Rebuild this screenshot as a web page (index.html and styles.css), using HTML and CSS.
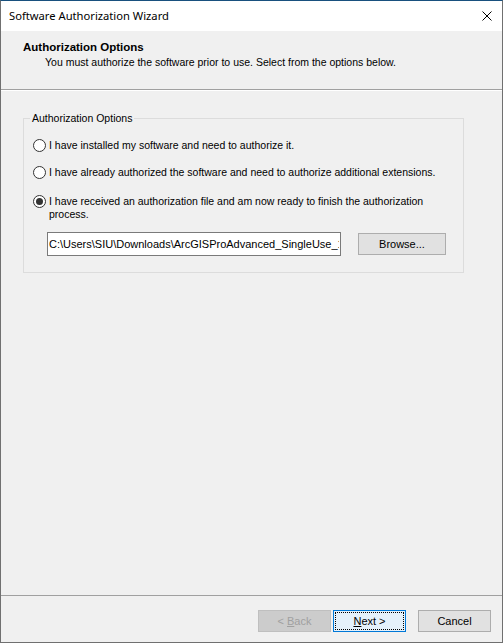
FILE: index.html
```html
<!DOCTYPE html>
<html lang="en">
<head>
    <meta charset="UTF-8">
    <meta name="viewport" content="width=device-width, initial-scale=1.0">
    <title>Software Authorization Wizard</title>
    <link rel="stylesheet" href="styles.css">
</head>
<body>
    <div class="window">
        <div class="titlebar">
            <span class="title">Software Authorization Wizard</span>
            <svg class="close" width="10" height="10" viewBox="0 0 10 10">
                <path d="M0.5 0.5 L9.5 9.5 M9.5 0.5 L0.5 9.5" stroke="#000" stroke-width="1" fill="none"/>
            </svg>
        </div>

        <div class="header">
            <div class="header-title">Authorization Options</div>
            <div class="header-sub">You must authorize the software prior to use. Select from the options below.</div>
        </div>

        <div class="content">
            <fieldset class="group">
                <legend>Authorization Options</legend>

                <label class="option">
                    <span class="radio"></span>
                    <span>I have installed my software and need to authorize it.</span>
                </label>
                <label class="option">
                    <span class="radio"></span>
                    <span>I have already authorized the software and need to authorize additional extensions.</span>
                </label>
                <label class="option option-last">
                    <span class="radio checked"></span>
                    <span>I have received an authorization file and am now ready to finish the authorization<br>process.</span>
                </label>

                <div class="file-row">
                    <input class="file-path" type="text" value="C:\Users\SIU\Downloads\ArcGISProAdvanced_SingleUse_1.prvc" readonly>
                    <button class="btn">Browse...</button>
                </div>
            </fieldset>
        </div>

        <div class="footer">
            <button class="btn btn-disabled">&lt; <u>B</u>ack</button>
            <button class="btn btn-default"><u>N</u>ext &gt;</button>
            <button class="btn btn-cancel">Cancel</button>
        </div>
    </div>
</body>
</html>
```

FILE: styles.css
```css
* {
    margin: 0;
    padding: 0;
    box-sizing: border-box;
}

body {
    font-family: "Liberation Sans", Arial, sans-serif;
    font-size: 10.5px;
    color: #000;
    background-color: #f0f0f0;
}

.window {
    width: 503px;
    height: 643px;
    display: flex;
    flex-direction: column;
    background-color: #f0f0f0;
    border: 1px solid #707070;
    border-top-color: #18507e;
}

/* barra de titulo */
.titlebar {
    height: 30px;
    flex-shrink: 0;
    display: flex;
    align-items: center;
    justify-content: space-between;
    padding: 0 10px 0 8px;
    background-color: #fff;
}

.title {
    font-family: "Noto Sans", "Open Sans", sans-serif;
    font-size: 11.2px;
    line-height: 16px;
}

.close {
    display: block;
}

/* cabecalho do assistente */
.header {
    height: 59px;
    flex-shrink: 0;
    padding: 10px 0 0 22px;
    border-bottom: 1px solid #a0a0a0;
    box-shadow: 0 1px 0 #fff;
}

.header-title {
    font-weight: bold;
    font-size: 11.5px;
    line-height: 13px;
}

.header-sub {
    margin: 2px 0 0 22px;
    line-height: 13px;
}

.content {
    flex: 1;
    padding: 21px 0 0 22px;
}

.group {
    width: 441px;
    border: 1px solid #dcdcdc;
    padding: 0 0 16px 9px;
}

.group legend {
    font-size: 10.5px;
    line-height: 14px;
    margin-left: -3px;
    padding: 0 2px;
}

.option {
    display: flex;
    align-items: flex-start;
    gap: 3px;
    margin-top: 14px;
    line-height: 13px;
}

.option-last {
    margin-top: 16px;
}

.radio {
    width: 13px;
    height: 13px;
    flex-shrink: 0;
    border: 1px solid #333;
    border-radius: 50%;
    background-color: #fff;
    display: flex;
    align-items: center;
    justify-content: center;
}

.radio.checked::after {
    content: "";
    width: 7px;
    height: 7px;
    border-radius: 50%;
    background-color: #333;
}

.file-row {
    display: flex;
    align-items: center;
    margin-top: 11px;
    padding-left: 14px;
}

.file-path {
    width: 294px;
    height: 24px;
    border: 1px solid #7a7a7a;
    background-color: #fff;
    padding: 0 1px;
    font-family: "Liberation Sans", Arial, sans-serif;
    font-size: 11px;
    color: #000;
    outline: none;
}

.btn {
    height: 22px;
    font-family: "Liberation Sans", Arial, sans-serif;
    font-size: 11px;
    color: #000;
    background-color: #e1e1e1;
    border: 1px solid #adadad;
}

.file-row .btn {
    width: 88px;
    margin-left: 17px;
}

/* botoes de baixo */
.footer {
    height: 47px;
    flex-shrink: 0;
    display: flex;
    justify-content: flex-end;
    align-items: flex-start;
    padding: 14px 11px 0 0;
    border-top: 1px solid #a0a0a0;
}

.footer .btn {
    width: 73px;
}

.btn-disabled {
    background-color: #cccccc;
    border-color: #bfbfbf;
    color: #a0a0a0;
}

.btn-default {
    margin-left: 2px;
    background-color: #e5f1fb;
    border-color: #0078d7;
    outline: 1px dotted #000;
    outline-offset: -3px;
}

.btn-cancel {
    margin-left: 12px;
}
```
